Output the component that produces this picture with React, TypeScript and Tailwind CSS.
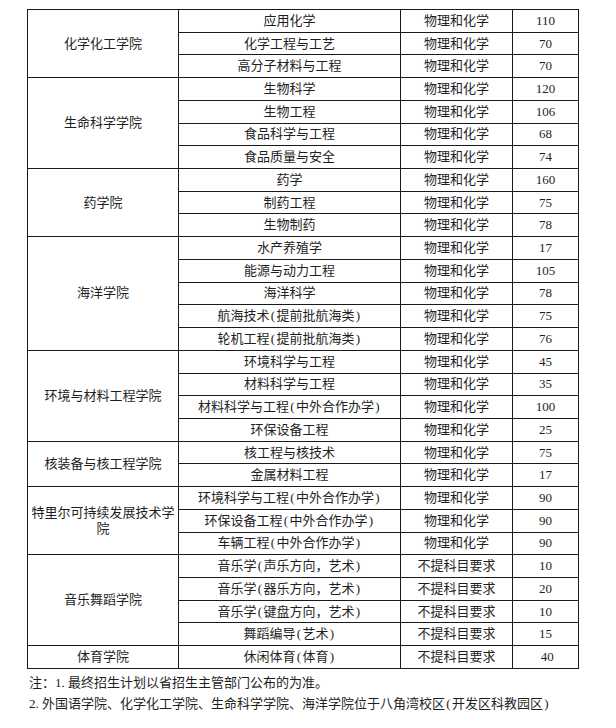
import React from "react";

type Row = { major: string; req: string; n: string };
type Group = { name: string; rows: Row[] };

const P = "物理和化学";
const N = "不提科目要求";

const groups: Group[] = [
  { name: "化学化工学院", rows: [
    { major: "应用化学", req: P, n: "110" },
    { major: "化学工程与工艺", req: P, n: "70" },
    { major: "高分子材料与工程", req: P, n: "70" },
  ]},
  { name: "生命科学学院", rows: [
    { major: "生物科学", req: P, n: "120" },
    { major: "生物工程", req: P, n: "106" },
    { major: "食品科学与工程", req: P, n: "68" },
    { major: "食品质量与安全", req: P, n: "74" },
  ]},
  { name: "药学院", rows: [
    { major: "药学", req: P, n: "160" },
    { major: "制药工程", req: P, n: "75" },
    { major: "生物制药", req: P, n: "78" },
  ]},
  { name: "海洋学院", rows: [
    { major: "水产养殖学", req: P, n: "17" },
    { major: "能源与动力工程", req: P, n: "105" },
    { major: "海洋科学", req: P, n: "78" },
    { major: "航海技术(提前批航海类)", req: P, n: "75" },
    { major: "轮机工程(提前批航海类)", req: P, n: "76" },
  ]},
  { name: "环境与材料工程学院", rows: [
    { major: "环境科学与工程", req: P, n: "45" },
    { major: "材料科学与工程", req: P, n: "35" },
    { major: "材料科学与工程(中外合作办学)", req: P, n: "100" },
    { major: "环保设备工程", req: P, n: "25" },
  ]},
  { name: "核装备与核工程学院", rows: [
    { major: "核工程与核技术", req: P, n: "75" },
    { major: "金属材料工程", req: P, n: "17" },
  ]},
  { name: "特里尔可持续发展技术学院", rows: [
    { major: "环境科学与工程(中外合作办学)", req: P, n: "90" },
    { major: "环保设备工程(中外合作办学)", req: P, n: "90" },
    { major: "车辆工程(中外合作办学)", req: P, n: "90" },
  ]},
  { name: "音乐舞蹈学院", rows: [
    { major: "音乐学(声乐方向，艺术)", req: N, n: "10" },
    { major: "音乐学(器乐方向，艺术)", req: N, n: "20" },
    { major: "音乐学(键盘方向，艺术)", req: N, n: "10" },
    { major: "舞蹈编导(艺术)", req: N, n: "15" },
  ]},
  { name: "体育学院", rows: [
    { major: "休闲体育(体育)", req: N, n: "\u00a040" },
  ]},
];

function Txt({ s }: { s: string }) {
  const parts = s.split(/([()])/);
  return (
    <>
      {parts.map((p, i) =>
        p === "(" || p === ")" ? (
          <span key={i} className="inline-block w-[7px] text-center">
            {p}
          </span>
        ) : (
          <React.Fragment key={i}>{p}</React.Fragment>
        )
      )}
    </>
  );
}

const cell = "border border-[#1a1a1a] text-center align-middle p-0";

export default function App() {
  return (
    <div
      className="w-[616px] h-[728px] bg-white text-[#1e1e1e] text-[13px] leading-[16px]"
      style={{ fontFamily: '"Liberation Serif", "Noto Sans CJK SC", serif' }}
    >
      <div className="pt-[9px] pl-[27px]">
        <table className="border-collapse table-fixed w-[551px]">
          <colgroup>
            <col className="w-[151px]" />
            <col className="w-[222px]" />
            <col className="w-[112px]" />
            <col className="w-[66px]" />
          </colgroup>
          <tbody>
            {groups.map((g, gi) =>
              g.rows.map((r, ri) => (
                <tr key={`${gi}-${ri}`} className="h-[22.72px]">
                  {ri === 0 && (
                    <td rowSpan={g.rows.length} className={`${cell} px-[3px]`}>
                      {g.name}
                    </td>
                  )}
                  <td className={cell}>
                    <Txt s={r.major} />
                  </td>
                  <td className={cell}>{r.req}</td>
                  <td className={cell}>{r.n}</td>
                </tr>
              ))
            )}
          </tbody>
        </table>
        <div className="mt-[3px] pl-[2px] leading-[21px]">
          <div>注：1. 最终招生计划以省招生主管部门公布的为准。</div>
          <div>
            2. 外国语学院、化学化工学院、生命科学学院、海洋学院位于八角湾校区
            <Txt s="(开发区科教园区)" />
          </div>
        </div>
      </div>
    </div>
  );
}
